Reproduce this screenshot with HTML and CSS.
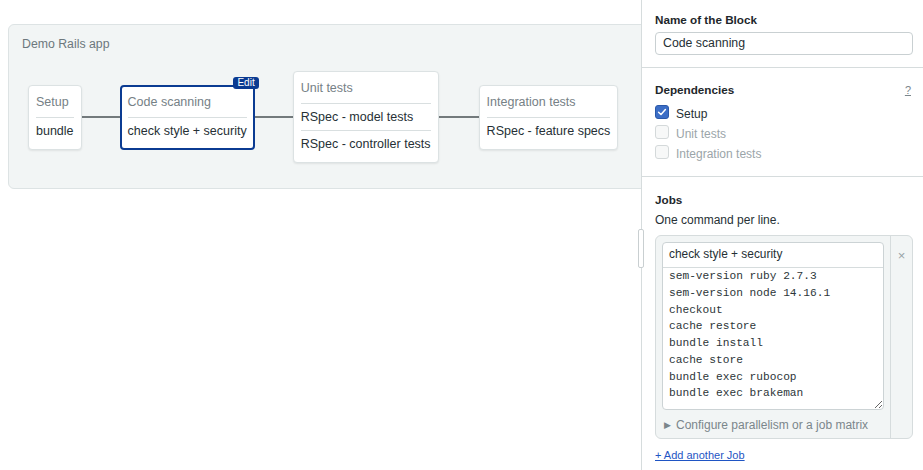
FILE: index.html
```html
<!DOCTYPE html>
<html lang="en">
<head>
<meta charset="utf-8">
<title>Workflow Builder</title>
<link rel="stylesheet" href="styles.css">
</head>
<body>
<div class="app">
  <main class="canvas">
    <section class="workflow">
      <div class="wf-title">Demo Rails app</div>
      <div class="pipeline">
        <div class="block">
          <div class="block-title">Setup</div>
          <div class="job">bundle</div>
        </div>
        <div class="connector"></div>
        <div class="block selected">
          <span class="edit-badge">Edit</span>
          <div class="block-title">Code scanning</div>
          <div class="job">check style + security</div>
        </div>
        <div class="connector"></div>
        <div class="block">
          <div class="block-title">Unit tests</div>
          <div class="job">RSpec - model tests</div>
          <div class="job">RSpec - controller tests</div>
        </div>
        <div class="connector wide"></div>
        <div class="block">
          <div class="block-title">Integration tests</div>
          <div class="job">RSpec - feature specs</div>
        </div>
      </div>
    </section>
  </main>

  <aside class="sidebar">
    <div class="resize-handle"></div>

    <section class="panel-section name-section">
      <div class="field-label">Name of the Block</div>
      <div class="text-input">Code scanning</div>
    </section>

    <section class="panel-section deps-section">
      <div class="field-head">
        <span class="field-label">Dependencies</span>
        <a class="help" href="#">?</a>
      </div>
      <label class="check-row">
        <span class="checkbox checked">
          <svg viewBox="0 0 14 14" width="14" height="14"><path d="M3.6 7.2 L6 9.5 L10.4 4.6" fill="none" stroke="#ffffff" stroke-width="1.5" stroke-linecap="round" stroke-linejoin="round"/></svg>
        </span>
        <span class="check-label">Setup</span>
      </label>
      <label class="check-row disabled">
        <span class="checkbox"></span>
        <span class="check-label">Unit tests</span>
      </label>
      <label class="check-row disabled">
        <span class="checkbox"></span>
        <span class="check-label">Integration tests</span>
      </label>
    </section>

    <section class="panel-section jobs-section">
      <div class="field-label">Jobs</div>
      <div class="hint">One command per line.</div>
      <div class="jobs-box">
        <div class="jobs-main">
          <div class="job-card">
            <div class="job-name">check style + security</div>
            <div class="commands">sem-version ruby 2.7.3
sem-version node 14.16.1
checkout
cache restore
bundle install
cache store
bundle exec rubocop
bundle exec brakeman</div>
          </div>
          <div class="config-row"><span class="caret">&#9654;</span>Configure parallelism or a job matrix</div>
        </div>
        <div class="jobs-side"><span class="remove">&times;</span></div>
      </div>
      <a class="add-job" href="#">+ Add another Job</a>
    </section>
  </aside>
</div>
</body>
</html>
```

FILE: styles.css
```css
* { box-sizing: border-box; }

html, body {
  margin: 0;
  padding: 0;
  background: #ffffff;
}

body {
  font-family: "Liberation Sans", Arial, sans-serif;
  color: #263238;
  width: 923px;
  height: 470px;
  overflow: hidden;
}

.app {
  display: flex;
  height: 470px;
}

/* ---------- canvas ---------- */
.canvas {
  flex: 1;
  min-width: 0;
  overflow: hidden;
  padding: 24px 0 0 8px;
}

.workflow {
  background: #f2f5f5;
  border: 1px solid #dde3e4;
  border-radius: 6px;
  margin-right: -12px;
  padding: 9px 13px 25px;
}

.wf-title {
  font-size: 12.3px;
  line-height: 20px;
  color: #6d787d;
}

.pipeline {
  display: flex;
  align-items: center;
  margin-top: 17px;
  padding-left: 6px;
}

.connector {
  width: 38px;
  height: 2px;
  background: #737a7c;
  flex: none;
}
.connector.wide { width: 40px; }

.block {
  position: relative;
  background: #ffffff;
  border: 1px solid #dce2e3;
  border-radius: 4px;
  padding: 0 7px 5px;
  box-shadow: 0 1px 2px rgba(0, 0, 0, 0.08);
  font-size: 12.5px;
  white-space: nowrap;
}

.block.selected {
  border: 2px solid #0b3b92;
  padding: 0 6px 4px;
  box-shadow: none;
}
.block.selected .block-title { padding-top: 5px; }

.block-title {
  line-height: 20px;
  padding: 6px 0 5px;
  color: #768186;
  border-bottom: 1px solid #d9dfe0;
}

.job {
  line-height: 20px;
  padding: 3px 0;
  color: #263035;
}
.job + .job { border-top: 1px solid #d9dfe0; }

.edit-badge {
  position: absolute;
  top: -10px;
  right: -6px;
  background: #0b3b92;
  color: #ffffff;
  font-size: 10px;
  line-height: 12px;
  padding: 0 4px;
  border-radius: 3px;
}

/* ---------- sidebar ---------- */
.sidebar {
  position: relative;
  flex: 0 0 282px;
  border-left: 1px solid #d6dcdd;
  background: #ffffff;
}

.resize-handle {
  position: absolute;
  left: -4px;
  top: 229px;
  width: 6px;
  height: 39px;
  background: #ffffff;
  border: 1px solid #c9cfd1;
  border-radius: 2px;
}

.panel-section {
  padding: 0 10px 0 13px;
  border-bottom: 1px solid #d6dcdd;
}

.field-label {
  font-size: 11.7px;
  font-weight: bold;
  line-height: 16px;
  color: #1e272b;
}

.name-section { padding-top: 12px; padding-bottom: 12px; }

.text-input {
  margin-top: 4px;
  height: 23px;
  border: 1px solid #c9d0d2;
  border-radius: 4px;
  padding: 0 7px;
  font-size: 12.3px;
  line-height: 21px;
  color: #263035;
}

.deps-section { padding-top: 14px; padding-bottom: 14px; }

.field-head {
  display: flex;
  justify-content: space-between;
  align-items: center;
  margin-bottom: 4px;
}

.help {
  font-size: 11px;
  color: #7b868b;
  line-height: 16px;
  padding-right: 2px;
}

.check-row {
  display: flex;
  align-items: center;
  height: 20px;
  gap: 7px;
  font-size: 12px;
}

.checkbox {
  width: 14px;
  height: 14px;
  border: 1px solid #d4d9da;
  border-radius: 3px;
  background: #f7f8f8;
  display: flex;
  flex: none;
}
.checkbox.checked {
  background: #3c6ec6;
  border-color: #2b59a9;
}
.checkbox svg { display: block; margin: -1px; }

.check-label { color: #263035; padding-top: 3px; }
.check-row.disabled .check-label { color: #9ba5a9; }

.jobs-section {
  border-bottom: none;
  padding-top: 15px;
}

.hint {
  margin-top: 4px;
  font-size: 12px;
  line-height: 16px;
  color: #263035;
}

.jobs-box {
  margin-top: 7px;
  display: flex;
  height: 204px;
  background: #f2f5f5;
  border: 1px solid #d6dcdd;
  border-radius: 6px;
}

.jobs-main {
  flex: 1;
  padding: 6px 6px 0 6px;
}

.jobs-side {
  width: 22px;
  border-left: 1px solid #d6dcdd;
  display: flex;
  justify-content: center;
  padding-top: 12px;
}

.remove {
  font-size: 13px;
  line-height: 16px;
  color: #9aa3a7;
}

.job-card {
  background: #ffffff;
  border: 1px solid #ccd3d5;
  border-radius: 4px;
}

.job-name {
  height: 25px;
  border-bottom: 1px solid #d6dcdd;
  padding: 0 6px;
  font-size: 11.9px;
  line-height: 23px;
  color: #263035;
}

.commands {
  height: 141px;
  padding: 0 6px;
  font-family: "Liberation Mono", "Courier New", monospace;
  font-size: 11.2px;
  line-height: 16.75px;
  color: #2d3639;
  white-space: pre;
  overflow: auto;
  resize: vertical;
}

.config-row {
  display: flex;
  align-items: center;
  height: 30px;
  padding-left: 2px;
  font-size: 12px;
  color: #7b868b;
}

.caret {
  font-size: 8.5px;
  margin-right: 5px;
  color: #7b868b;
}

.add-job {
  display: inline-block;
  margin-top: 8px;
  font-size: 11px;
  line-height: 16px;
  color: #1f55c4;
}
```
